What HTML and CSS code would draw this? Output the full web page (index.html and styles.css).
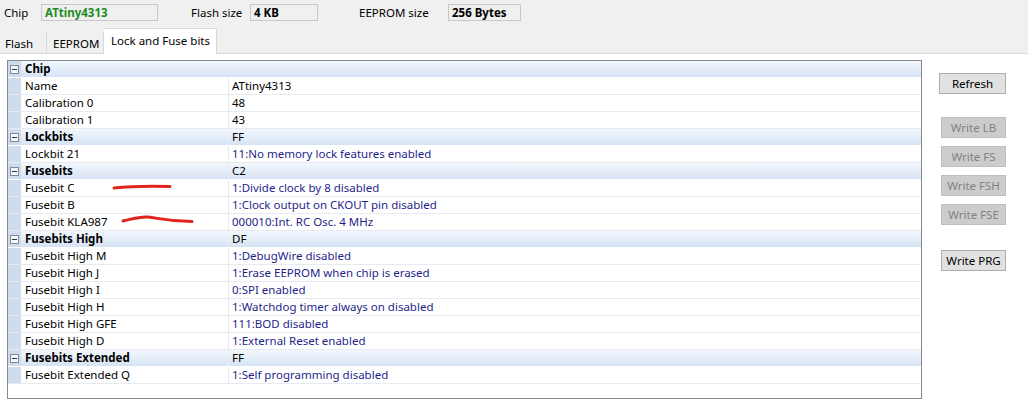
FILE: index.html
```html
<!DOCTYPE html>
<html>
<head>
<meta charset="utf-8">
<link rel="stylesheet" href="styles.css">
</head>
<body>
<div class="top">
  <div class="field">
    <span class="lbl lbl-chip">Chip</span>
    <span class="box box-chip green">ATtiny4313</span>
  </div>
  <div class="field">
    <span class="lbl lbl-flash">Flash size</span>
    <span class="box box-flash">4 KB</span>
  </div>
  <div class="field">
    <span class="lbl lbl-eeprom">EEPROM size</span>
    <span class="box box-eeprom">256 Bytes</span>
  </div>
</div>
<div class="tabs">
  <div class="tab tab-flash">Flash</div>
  <div class="tab tab-eeprom">EEPROM</div>
  <div class="tab active">Lock and Fuse bits</div>
  <div class="tab-fill"></div>
</div>
<div class="content">
  <div class="grid">
    <div class="row cat nodiv"><span class="gut"><i class="exp"></i></span><span class="name">Chip</span><span class="val"></span></div>
    <div class="row"><span class="gut"></span><span class="name">Name</span><span class="val">ATtiny4313</span></div>
    <div class="row"><span class="gut"></span><span class="name">Calibration 0</span><span class="val">48</span></div>
    <div class="row"><span class="gut"></span><span class="name">Calibration 1</span><span class="val">43</span></div>
    <div class="row cat"><span class="gut"><i class="exp"></i></span><span class="name">Lockbits</span><span class="val">FF</span></div>
    <div class="row"><span class="gut"></span><span class="name">Lockbit 21</span><span class="val desc">11:No memory lock features enabled</span></div>
    <div class="row cat"><span class="gut"><i class="exp"></i></span><span class="name">Fusebits</span><span class="val">C2</span></div>
    <div class="row"><span class="gut"></span><span class="name">Fusebit C</span><span class="val desc">1:Divide clock by 8 disabled</span></div>
    <div class="row"><span class="gut"></span><span class="name">Fusebit B</span><span class="val desc">1:Clock output on CKOUT pin disabled</span></div>
    <div class="row"><span class="gut"></span><span class="name">Fusebit KLA987</span><span class="val desc">000010:Int. RC Osc. 4 MHz</span></div>
    <div class="row cat"><span class="gut"><i class="exp"></i></span><span class="name">Fusebits High</span><span class="val">DF</span></div>
    <div class="row"><span class="gut"></span><span class="name">Fusebit High M</span><span class="val desc">1:DebugWire disabled</span></div>
    <div class="row"><span class="gut"></span><span class="name">Fusebit High J</span><span class="val desc">1:Erase EEPROM when chip is erased</span></div>
    <div class="row"><span class="gut"></span><span class="name">Fusebit High I</span><span class="val desc">0:SPI enabled</span></div>
    <div class="row"><span class="gut"></span><span class="name">Fusebit High H</span><span class="val desc">1:Watchdog timer always on disabled</span></div>
    <div class="row"><span class="gut"></span><span class="name">Fusebit High GFE</span><span class="val desc">111:BOD disabled</span></div>
    <div class="row"><span class="gut"></span><span class="name">Fusebit High D</span><span class="val desc">1:External Reset enabled</span></div>
    <div class="row cat"><span class="gut"><i class="exp"></i></span><span class="name">Fusebits Extended</span><span class="val">FF</span></div>
    <div class="row"><span class="gut"></span><span class="name">Fusebit Extended Q</span><span class="val desc">1:Self programming disabled</span></div>
    <svg class="scribble" width="200" height="200" viewBox="0 0 200 200">
      <path d="M106 127 C 125 125, 145 125, 162 125.5" stroke="#e0241c" stroke-width="3" fill="none" stroke-linecap="round"/>
      <path d="M115 160 C 124 158, 131 155.5, 140 156 C 150 157, 160 160.5, 184 160.5" stroke="#e0241c" stroke-width="3" fill="none" stroke-linecap="round"/>
    </svg>
  </div>
  <div class="side">
    <button class="btn btn-refresh">Refresh</button>
    <button class="btn dis btn-lb">Write LB</button>
    <button class="btn dis">Write FS</button>
    <button class="btn dis">Write FSH</button>
    <button class="btn dis">Write FSE</button>
    <button class="btn btn-prg">Write PRG</button>
  </div>
</div>
</body>
</html>
```

FILE: styles.css
```css
html, body {
  margin: 0;
  padding: 0;
}
body {
  width: 1028px;
  height: 403px;
  overflow: hidden;
  background: #ffffff;
  font-family: "Noto Sans", "Open Sans", sans-serif;
  font-size: 11.5px;
  color: #000;
}
.top {
  background: #f0f0f0;
  height: 27px;
  display: flex;
  align-items: flex-start;
  padding-top: 4px;
  box-sizing: border-box;
}
.field {
  display: flex;
  align-items: center;
  height: 17px;
}
.lbl {
  line-height: 17px;
}
.lbl-chip { margin-left: 4px; width: 37px; }
.lbl-flash { margin-left: 33px; width: 59px; }
.lbl-eeprom { margin-left: 41px; width: 89px; }
.box {
  height: 17px;
  box-sizing: border-box;
  border: 1px solid #c8c8c8;
  background: #f0f0f0;
  font-weight: bold;
  line-height: 15px;
  padding-left: 3px;
}
.box-chip { width: 117px; }
.box-flash { width: 68px; }
.box-eeprom { width: 73px; }
.green { color: #1e8c1e; }

.tabs {
  background: #f0f0f0;
  height: 27px;
  display: flex;
  align-items: flex-end;
}
.tab {
  height: 22px;
  box-sizing: border-box;
  line-height: 23px;
  border-bottom: 1px solid #d9d9d9;
  border-right: 1px solid #d9d9d9;
  padding-left: 5px;
}
.tab-flash { width: 47px; }
.tab-eeprom { width: 57px; padding-left: 6px; }
.tab.active {
  background: #ffffff;
  height: 26px;
  line-height: 24px;
  width: 113px;
  border-bottom: none;
  border-top: 1px solid #d9d9d9;
  padding-left: 7px;
}
.tab-fill {
  flex: 1;
  border-bottom: 1px solid #d9d9d9;
}

.content {
  display: flex;
  align-items: flex-start;
  padding: 6px 0 0 7px;
}
.grid {
  position: relative;
  width: 915px;
  height: 339px;
  box-sizing: border-box;
  border: 1px solid #828790;
  background: #fff;
}
.row {
  display: flex;
  height: 17px;
  box-sizing: border-box;
  border-bottom: 1px solid #e6ebf2;
  line-height: 16px;
}
.gut {
  width: 13px;
  flex: none;
  background: #cfdcee;
  position: relative;
}
.name {
  width: 208px;
  flex: none;
  box-sizing: border-box;
  padding-left: 4px;
  border-right: 1px solid #e6ebf2;
  white-space: nowrap;
}
.val {
  flex: 1;
  padding-left: 3px;
  white-space: nowrap;
}
.desc { color: #1f1f8a; }
.cat {
  background: linear-gradient(#f3f7fc, #d6e3f4);
  border-bottom: 1px solid #ffffff;
}
.cat .name {
  font-weight: bold;
  border-right: 1px solid #e9eff8;
}
.cat.nodiv .name { border-right-color: transparent; }
.cat .gut { background: #cfdcee; }
.exp {
  position: absolute;
  left: 2px;
  top: 4px;
  width: 9px;
  height: 9px;
  box-sizing: border-box;
  border: 1px solid #7d8a99;
  background: #f4f7fb;
}
.exp::after {
  content: "";
  position: absolute;
  left: 1px;
  top: 3px;
  width: 5px;
  height: 1px;
  background: #333;
}
.scribble {
  position: absolute;
  left: 0;
  top: 0;
  width: 200px;
  height: 200px;
  pointer-events: none;
}

.side {
  display: flex;
  flex-direction: column;
  margin-left: 17px;
  padding-top: 13px;
}
.btn {
  font-family: "Noto Sans", "Open Sans", sans-serif;
  font-size: 11.5px;
  width: 65px;
  height: 21px;
  padding: 0;
  margin: 0 0 8px 2px;
  background: #e1e1e1;
  border: 1px solid #adadad;
  color: #000;
  line-height: 19px;
}
.btn-refresh { width: 67px; margin-left: 0; margin-bottom: 23px; }
.dis {
  background: #cccccc;
  border-color: #bfbfbf;
  color: #838383;
}
.btn-prg { margin-top: 17px; }
```
